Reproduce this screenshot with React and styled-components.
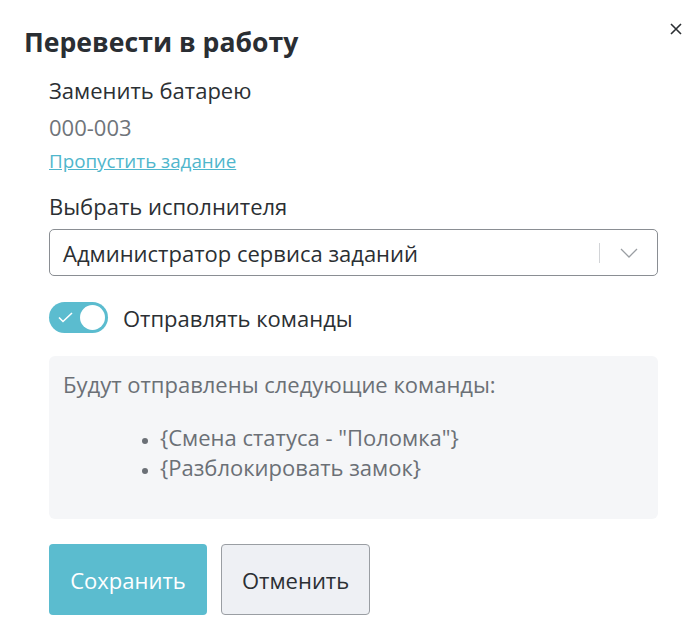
import styled, { createGlobalStyle } from "styled-components"
import { useState } from "react"

const Global = createGlobalStyle`
    html, body {
        margin: 0;
        background: #fff;
        font-family: "Open Sans", "Noto Sans", sans-serif;
        color: #2b2f33;
    }
`
const Modal = styled.div`
    width: 700px;
    height: 639px;
    box-sizing: border-box;
    padding: 24px 42px 0 24px;
    position: relative;
`
const Title = styled.h2`
    margin: 0;
    font-size: 26.6px;
    font-weight: 700;
    line-height: 36px;
    color: #2a2e33;
`
const Close = styled.button`
    position: absolute;
    top: 17px;
    right: 12px;
    width: 24px;
    height: 24px;
    padding: 0;
    border: none;
    background: none;
    display: flex;
    align-items: center;
    justify-content: center;
    cursor: pointer;
`
const Body = styled.div`
    padding-left: 25px;
    display: flex;
    flex-direction: column;
`
const Text = styled.div`
    font-size: 22px;
    line-height: 26px;
    color: ${({$muted}) => $muted ? "#6f747a" : "#2b2f33"};
    margin-top: ${({$mt}) => $mt || 0}px;
`
const Link = styled.a`
    font-size: 18.8px;
    line-height: 24px;
    color: #4fb6cc;
    text-decoration: underline;
    margin-top: 9px;
    align-self: flex-start;
    cursor: pointer;
`
const Select = styled.div`
    margin-top: 10px;
    height: 47px;
    box-sizing: border-box;
    border: 1px solid #8a8e93;
    border-radius: 5px;
    display: flex;
    align-items: center;
    padding-left: 13px;
    font-size: 22px;
    color: #2b2f33;
`
const SelectValue = styled.span`
    flex: 1;
`
const Divider = styled.span`
    width: 1px;
    height: 20px;
    background: #d2d4d7;
`
const Chevron = styled.span`
    width: 57px;
    display: flex;
    justify-content: center;
`
const ToggleRow = styled.label`
    margin-top: 26px;
    display: flex;
    align-items: center;
    gap: 15px;
    font-size: 22px;
    line-height: 26px;
    cursor: pointer;
`
const Track = styled.span`
    width: 59px;
    height: 31px;
    border-radius: 16px;
    background: ${({$on}) => $on ? "#5bbccf" : "#c8cbd0"};
    display: flex;
    align-items: center;
    justify-content: ${({$on}) => $on ? "flex-end" : "flex-start"};
    padding: 0 3px;
    box-sizing: border-box;
    position: relative;
    flex-shrink: 0;
`
const Knob = styled.span`
    width: 25px;
    height: 25px;
    border-radius: 50%;
    background: #fff;
`
const Check = styled.svg`
    position: absolute;
    left: 9px;
    top: 10px;
`
const Info = styled.div`
    margin-top: 23px;
    background: #f5f6f8;
    border-radius: 6px;
    height: 163px;
    box-sizing: border-box;
    padding: 15px 14px;
    color: #6b7076;
    font-size: 22px;
    line-height: 26px;
`
const List = styled.ul`
    margin: 25px 0 0;
    padding-left: 97px;
    li {
        line-height: 30px;
    }
    li::marker {
        font-size: 16px;
    }
`
const Actions = styled.div`
    margin-top: 25px;
    display: flex;
    gap: 14px;
`
const Button = styled.button`
    height: 71px;
    padding: 0 20px;
    border-radius: 4px;
    font-family: inherit;
    font-size: 22px;
    cursor: pointer;
    box-sizing: border-box;
    border: ${({$primary}) => $primary ? "none" : "1px solid #9a9ea3"};
    background: ${({$primary}) => $primary ? "#5bbccf" : "#eef0f4"};
    color: ${({$primary}) => $primary ? "#fff" : "#2b2f33"};
    width: ${({$primary}) => $primary ? 158 : 149}px;
`

const App = () => {
    const [on, setOn] = useState(true)
    return (
        <Modal>
            <Global />
            <Title>Перевести в работу</Title>
            <Close aria-label="close">
                <svg width="12" height="12" viewBox="0 0 12 12">
                    <path d="M1 1L11 11M11 1L1 11" stroke="#2b2f33" strokeWidth="1.6" />
                </svg>
            </Close>
            <Body>
                <Text $mt={17}>Заменить батарею</Text>
                <Text $muted $mt={11}>000-003</Text>
                <Link href="#">Пропустить задание</Link>
                <Text $mt={20}>Выбрать исполнителя</Text>
                <Select>
                    <SelectValue>Администратор сервиса заданий</SelectValue>
                    <Divider />
                    <Chevron>
                        <svg width="18" height="10" viewBox="0 0 18 10">
                            <path d="M1 1L9 9L17 1" fill="none" stroke="#9a9ea3" strokeWidth="1.3" />
                        </svg>
                    </Chevron>
                </Select>
                <ToggleRow onClick={() => setOn(v => !v)}>
                    <Track $on={on}>
                        {on && (
                            <Check width="15" height="11" viewBox="0 0 15 11">
                                <path d="M1 5.5L5 9.5L14 1" fill="none" stroke="#fff" strokeWidth="1.6" />
                            </Check>
                        )}
                        <Knob />
                    </Track>
                    Отправлять команды
                </ToggleRow>
                <Info>
                    Будут отправлены следующие команды:
                    <List>
                        <li>{'{Смена статуса - "Поломка"}'}</li>
                        <li>{'{Разблокировать замок}'}</li>
                    </List>
                </Info>
                <Actions>
                    <Button $primary>Сохранить</Button>
                    <Button>Отменить</Button>
                </Actions>
            </Body>
        </Modal>
    )
}

export default App
